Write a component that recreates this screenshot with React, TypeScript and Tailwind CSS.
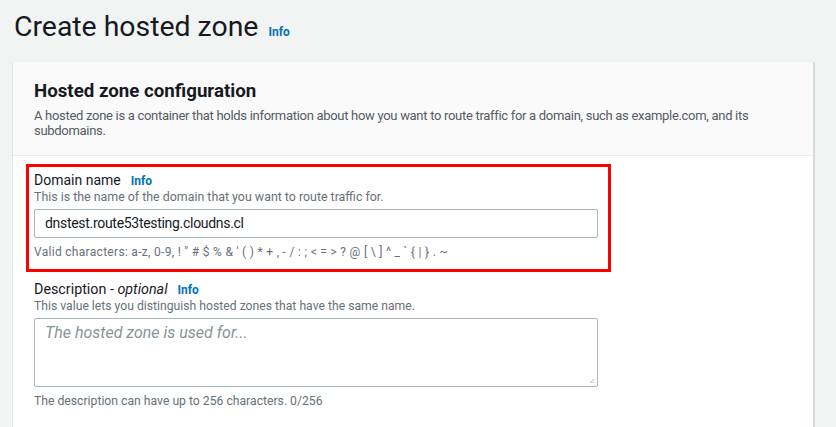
import React from "react";

const font = { fontFamily: 'Roboto, "Noto Sans", Arial, sans-serif' };

const InfoLink = () => (
  <a className="ml-[10px] text-[12px] font-bold text-[#0073bb] leading-none">Info</a>
);

export default function App() {
  return (
    <div
      className="w-[836px] h-[427px] overflow-hidden bg-[#f2f3f3] text-[#16191f]"
      style={font}
    >
      <div className="flex items-baseline pl-[14px] pt-[7px] h-[62px]">
        <h1 className="text-[28.4px] leading-[40px] font-normal">Create hosted zone</h1>
        <InfoLink />
      </div>

      <div className="ml-[12px] w-[803px] bg-white border-l border-[#e4e6e6] border-r-[2px] border-r-[#d5dbdb]">
        <div className="bg-[#fafafa] border-b border-[#eaeded] px-[21px] pt-[18px] h-[94px]">
          <h2 className="text-[18.7px] leading-[22px] font-bold">Hosted zone configuration</h2>
          <p className="text-[13px] leading-[15px] tracking-[-0.3px] text-[#545b64] mt-[6px] pr-[20px]">
            A hosted zone is a container that holds information about how you want to route traffic for a domain, such as example.com, and its subdomains.
          </p>
        </div>

        <div className="px-[21px] pt-[15px] pb-[20px]">
          <div className="relative w-[564px]">
            <div className="absolute -left-[8px] -top-[7px] w-[585px] h-[108px] border-[3px] border-[#ff0000] pointer-events-none" />
            <div className="flex items-baseline">
              <label className="text-[14px] leading-[18px]">Domain name</label>
              <InfoLink />
            </div>
            <p className="text-[12.4px] leading-[16px] text-[#687078]">
              This is the name of the domain that you want to route traffic for.
            </p>
            <div className="mt-[4px] h-[29px] border border-[#aab7b8] rounded-[2px] flex items-center px-[10px] text-[14px] tracking-[-0.3px]">
              dnstest.route53testing.cloudns.cl
            </div>
            <p className="mt-[6px] text-[12px] leading-[16px] tracking-[0.3px] text-[#687078]">
              Valid characters: a-z, 0-9, ! " # $ % &amp; ' ( ) * + , - / : ; &lt; = &gt; ? @ [ \ ] ^ _ ` {"{"} | {"}"} . ~
            </p>
          </div>

          <div className="w-[564px] mt-[20px]">
            <div className="flex items-baseline">
              <label className="text-[14.3px] leading-[18px]">
                Description - <i>optional</i>
              </label>
              <InfoLink />
            </div>
            <p className="text-[12.2px] leading-[16px] text-[#687078]">
              This value lets you distinguish hosted zones that have the same name.
            </p>
            <div className="relative mt-[4px] h-[69px] border border-[#aab7b8] rounded-[2px] px-[10px] pt-[2px]">
              <span className="text-[16px] leading-[22px] italic text-[#879596]">The hosted zone is used for...</span>
              <svg className="absolute right-[2px] bottom-[2px]" width="6" height="6" viewBox="0 0 6 6">
                <path d="M5 1 L1 5 M5 3.5 L3.5 5" stroke="#9ba7a8" strokeWidth="0.8" />
              </svg>
            </div>
            <p className="mt-[6px] text-[12.2px] leading-[16px] text-[#687078]">
              The description can have up to 256 characters. 0/256
            </p>
          </div>
        </div>
      </div>
    </div>
  );
}
